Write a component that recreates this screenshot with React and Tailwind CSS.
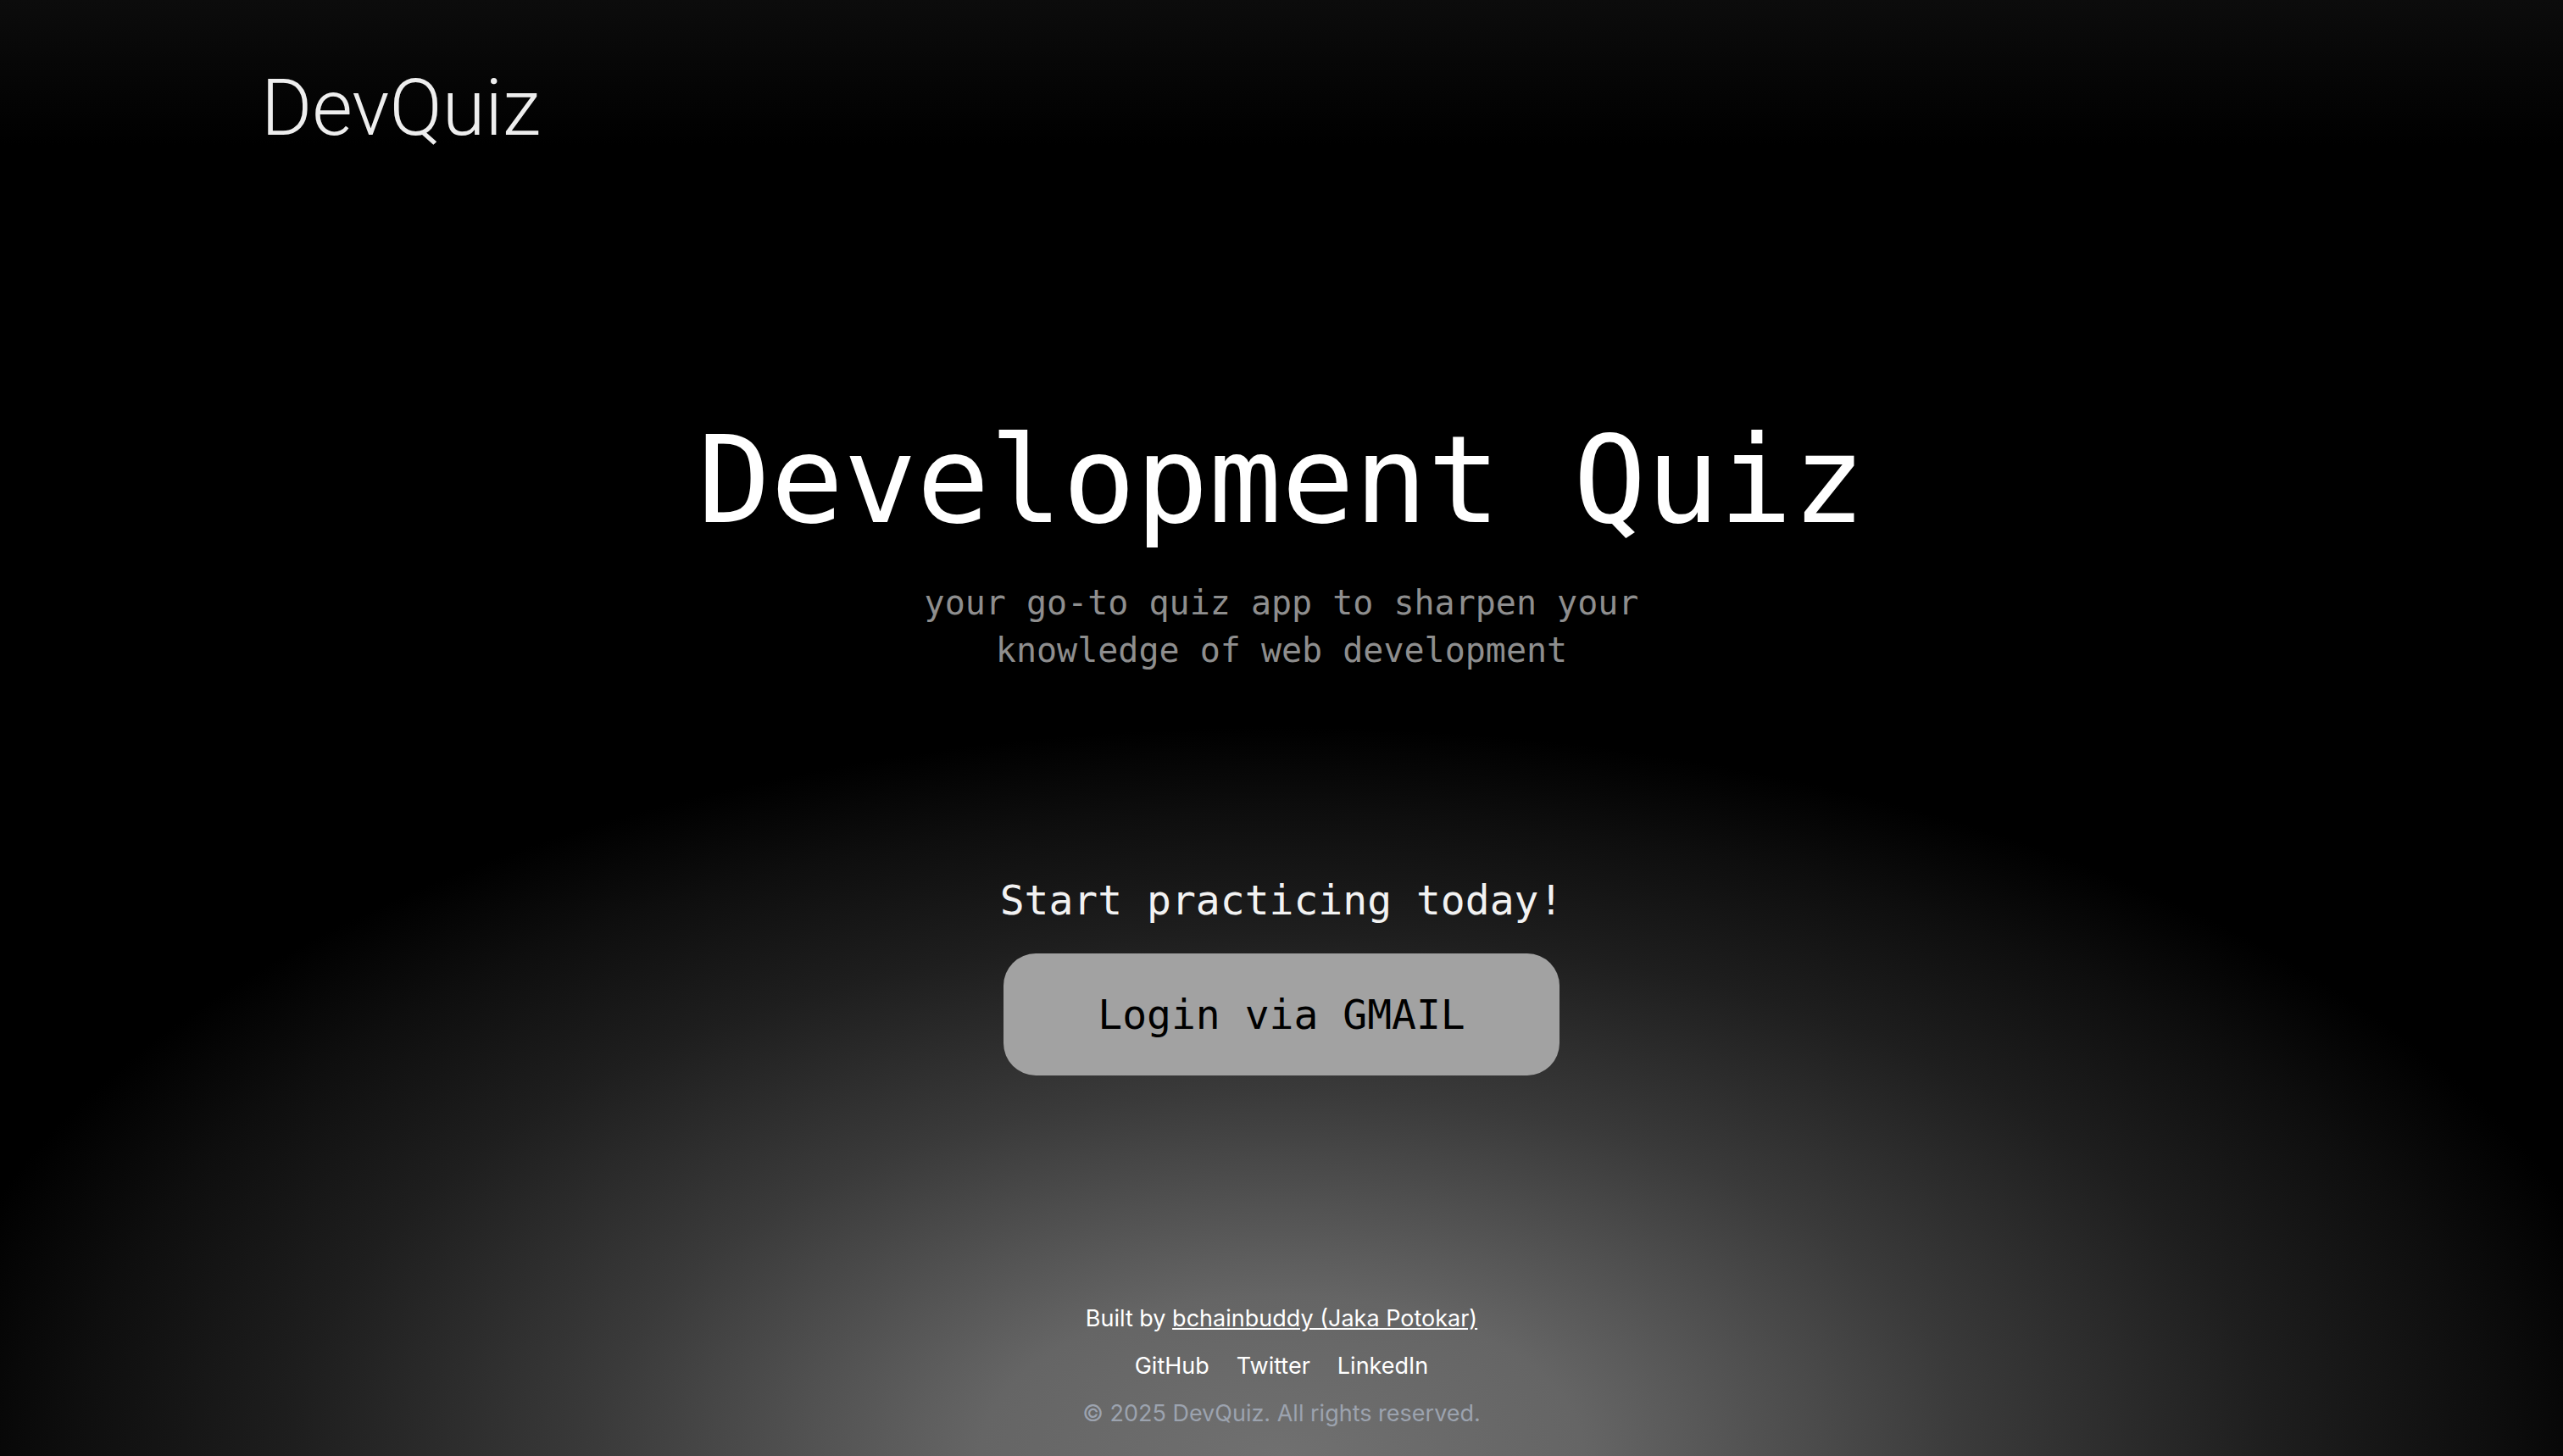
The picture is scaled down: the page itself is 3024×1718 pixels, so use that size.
export default function App() {
  return (
    <div className="flex h-screen min-h-screen w-full flex-col overflow-hidden bg-black bg-[radial-gradient(ellipse_1620px_860px_at_50%_100%,#707070_0%,#656565_22%,#3a3a3a_50%,#1e1e1e_72%,#0e0e0e_88%,rgba(0,0,0,0)_100%),linear-gradient(to_bottom,#0c0c0c,#000000_10%)]">
      <header className="pl-[308px] pt-[82px]">
        <div className="font-['Roboto',sans-serif] text-[92px] leading-none font-light text-[#eeeeee]">
          DevQuiz
        </div>
      </header>

      <main className="flex flex-col items-center font-['DejaVu_Sans_Mono',monospace]">
        <h1 className="mt-[321px] text-[143px] leading-[144px] font-normal text-white">
          Development Quiz
        </h1>
        <p className="mt-[44px] w-[860px] text-center text-[40px] leading-[56px] text-[#8e8e8e]">
          your go-to quiz app to sharpen your knowledge of web development
        </p>
        <p className="mt-[235px] text-[48px] leading-[64px] text-[#f2f2f2]">
          Start practicing today!
        </p>
        <button className="mt-[31px] flex h-[144px] w-[656px] items-center justify-center rounded-[38px] bg-[#a2a2a2] text-[48px] leading-[64px] text-black">
          Login via GMAIL
        </button>
      </main>

      <footer className="mt-auto flex flex-col items-center gap-[24px] pb-[34px] font-['Inter',sans-serif] text-[27px] leading-[32px]">
        <p className="text-white">
          Built by{" "}
          <a href="#" className="underline">
            bchainbuddy (Jaka Potokar)
          </a>
        </p>
        <div className="flex gap-[32px] text-white">
          <a href="#">GitHub</a>
          <a href="#">Twitter</a>
          <a href="#">LinkedIn</a>
        </div>
        <p className="text-[#9ca3af]">© 2025 DevQuiz. All rights reserved.</p>
      </footer>
    </div>
  );
}
